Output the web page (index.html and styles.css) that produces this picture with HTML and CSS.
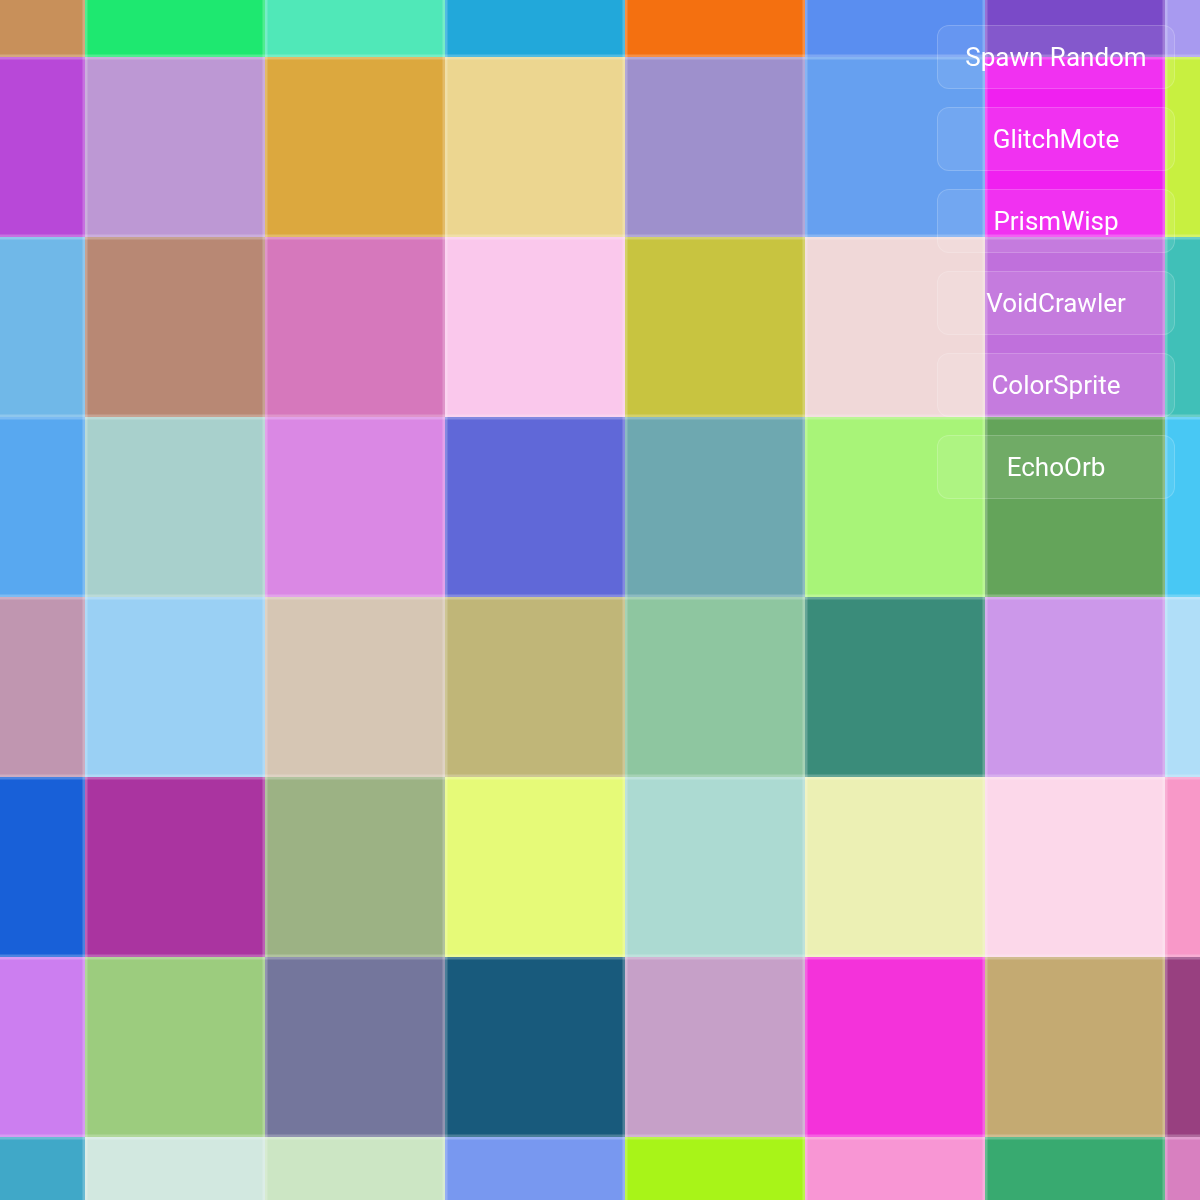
FILE: index.html
```html
<!DOCTYPE html>
<html lang="en">
<head>
    <meta charset="UTF-8">
    <meta name="viewport" content="width=device-width, initial-scale=1.0">
    <title>Pixel Field</title>
    <link rel="stylesheet" href="styles.css">
</head>
<body>
    <div class="field" id="field"></div>

    <div class="spawn-panel">
        <button class="spawn-btn">Spawn Random</button>
        <button class="spawn-btn">GlitchMote</button>
        <button class="spawn-btn">PrismWisp</button>
        <button class="spawn-btn">VoidCrawler</button>
        <button class="spawn-btn">ColorSprite</button>
        <button class="spawn-btn">EchoOrb</button>
    </div>

    <script src="script.js"></script>
</body>
</html>
```

FILE: styles.css
```css
* {
    margin: 0;
    padding: 0;
    box-sizing: border-box;
}

html, body {
    width: 1200px;
    height: 1200px;
    overflow: hidden;
}

body {
    font-family: Roboto, 'Noto Sans', sans-serif;
    background: #888;
}

.field {
    display: grid;
    grid-template-columns: 85px repeat(6, 180px) 35px;
    grid-template-rows: 57px repeat(6, 180px) 63px;
    width: 1200px;
    height: 1200px;
}

.tile {
    --line: rgba(255, 255, 255, 0.22);
    --l: var(--line);
    --r: var(--line);
    --t: var(--line);
    --b: var(--line);
    box-shadow:
        inset 2.5px 0 0 var(--l),
        inset -2.5px 0 0 var(--r),
        inset 0 2.5px 0 var(--t),
        inset 0 -2.5px 0 var(--b);
}

/* no seam along the screen edge */
.tile:nth-child(8n+1) { --l: transparent; }
.tile:nth-child(8n) { --r: transparent; }
.tile:nth-child(-n+8) { --t: transparent; }
.tile:nth-child(n+57) { --b: transparent; }

.spawn-panel {
    position: fixed;
    top: 25px;
    right: 25px;
    width: 238px;
    display: flex;
    flex-direction: column;
    gap: 18px;
}

.spawn-btn {
    height: 64px;
    width: 100%;
    background: rgba(255, 255, 255, 0.08);
    border: 1px solid rgba(255, 255, 255, 0.18);
    border-radius: 12px;
    color: #fff;
    font-family: Roboto, 'Noto Sans', sans-serif;
    font-size: 26px;
    cursor: pointer;
}

.spawn-btn:hover {
    background: rgba(255, 255, 255, 0.18);
}
```

FILE: script.js
```js
// tile colours, row by row
const colors = [
    '#c8905a', '#1ee870', '#50e8b8', '#22a8da', '#f47010', '#5a8ef0', '#7a4ac8', '#a89af0',
    '#b848d8', '#bd98d4', '#dca83e', '#ecd690', '#9e90cc', '#66a0f0', '#f020f0', '#c8f040',
    '#70b8e8', '#b88874', '#d678bc', '#fac8ec', '#c8c440', '#f0d8d8', '#c070dc', '#40c0b8',
    '#58a8f0', '#a8d0cc', '#da88e4', '#6068d8', '#6ea8b0', '#a8f478', '#64a45a', '#48c8f4',
    '#c096b0', '#9ad0f4', '#d6c6b4', '#c0b678', '#8ec6a0', '#3a8c7a', '#cc98ea', '#b0def8',
    '#1860d8', '#aa34a0', '#9cb284', '#e6fa78', '#acdad2', '#ecf0b4', '#fcd8ea', '#f898c8',
    '#cc7ef0', '#9ccc7e', '#74769c', '#185a7c', '#c6a0c8', '#f432da', '#c4aa72', '#984080',
    '#40a8c8', '#d2e8e0', '#cce6c4', '#7898f0', '#a8f418', '#f896d4', '#38aa70', '#d880c0'
];

const field = document.getElementById('field');

colors.forEach(c => {
    const tile = document.createElement('div');
    tile.className = 'tile';
    tile.style.background = c;
    field.appendChild(tile);
});
```
